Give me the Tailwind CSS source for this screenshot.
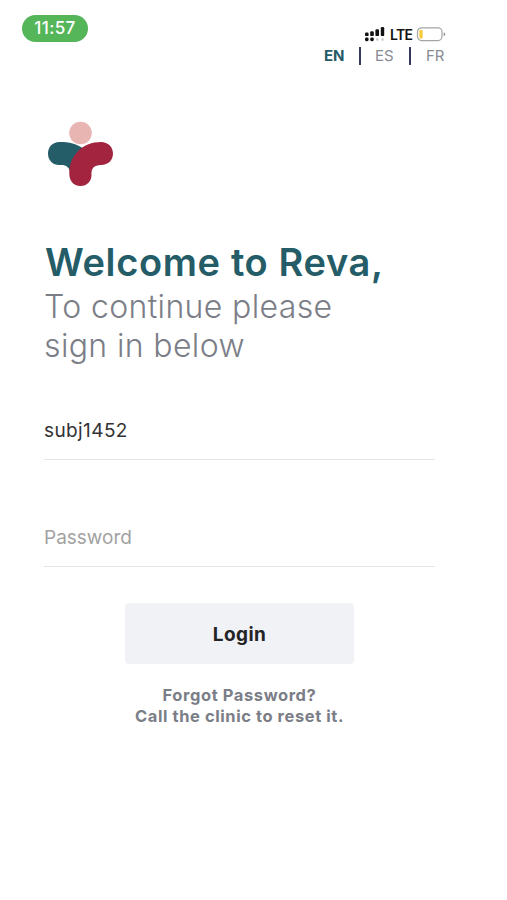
<!DOCTYPE html>
<html lang="en">
<head>
<meta charset="utf-8">
<title>Reva</title>
<script src="https://cdn.jsdelivr.net/npm/@tailwindcss/browser@4"></script>
</head>
<body class="bg-white font-['Inter',sans-serif]">
<div class="w-[479px] h-[900px] flex flex-col overflow-hidden">
  <header class="flex justify-between h-[66px] pl-[22px] pr-[33px]">
    <div class="mt-[15px] w-[66px] h-[27px] rounded-full bg-[#55b559] text-white text-[17px] leading-[27px] font-medium tracking-[0.4px] text-center">11:57</div>
    <div class="flex flex-col items-end pt-[26px]">
      <div class="flex items-center h-[17px]">
        <svg class="w-[22px] h-[17px]" viewBox="0 0 22 17" fill="#111">
          <rect x="1" y="6.5" width="3.6" height="3.6" rx="1.2"/><rect x="6.2" y="5.2" width="3.6" height="4.9" rx="1.2"/><rect x="11.4" y="3.3" width="3.6" height="6.8" rx="1.2"/><rect x="16.8" y="1" width="3.4" height="9.1" rx="1.2"/>
          <rect x="1" y="11.6" width="3.6" height="3.6" rx="1.4"/><rect x="6.2" y="11.6" width="3.6" height="3.6" rx="1.4"/>
          <rect x="12" y="12.2" width="2.6" height="2.6" rx="1" fill="#ccc"/><rect x="17.2" y="12.2" width="2.6" height="2.6" rx="1" fill="#ccc"/>
        </svg>
        <span class="ml-[4px] w-[23px] text-[14px] leading-[17px] font-semibold tracking-[-0.7px] text-[#111]">LTE</span>
        <svg class="ml-[3px] w-[30px] h-[17px]" viewBox="0 0 30 17" fill="none">
          <rect x="1.5" y="1.8" width="24.5" height="12.8" rx="4" stroke="#a5a5a5" stroke-width="1.2"/>
          <rect x="3.4" y="4" width="3.2" height="8.4" rx="1.2" fill="#f5ca36"/>
          <path d="M27.7 6.2v4q1.4-.6 1.4-2t-1.4-2z" fill="#8b8b8b"/>
        </svg>
      </div>
      <nav class="flex items-center h-[22px] mt-[2px] mr-px text-[15px] leading-[22px] text-[#878b93]">
        <span class="w-[21px] font-bold text-[#245c67]">EN</span>
        <i class="ml-[14px] w-[2px] h-[18px] bg-[#35375b]"></i>
        <span class="ml-[14px] w-[20px]">ES</span>
        <i class="ml-[14px] w-[2px] h-[18px] bg-[#35375b]"></i>
        <span class="ml-[15px] w-[19px]">FR</span>
      </nav>
    </div>
  </header>
  <main class="flex flex-col px-[44px]">
    <svg class="mt-[54px] ml-[3px] w-[68px] h-[68px]" viewBox="47 120 68 68">
      <circle cx="80.5" cy="133" r="11.3" fill="#e9b5b3"/>
      <path d="M59.500 142C52.500 142 48 147 48 153.700C48 160 52.500 165 59.500 165C65.500 164.300 69.500 167 70 172L84 160V149C77 143.700 69 142 59.500 142Z" fill="#245c67"/>
      <path d="M101 142C83 142 69.300 155 69.300 173.500C69.300 181 73.500 186 80.300 186C87.500 186 91.500 181 91.500 175C91 168.500 94 165 101 165C108.500 165 113 160 113 153.500C113 147 108 142 101 142Z" fill="#a2243e"/>
    </svg>
    <h1 class="mt-[51px] ml-px h-[48px] text-[38px] leading-[47px] font-semibold tracking-[0.64px] text-[#245c67] whitespace-nowrap">Welcome to Reva,</h1>
    <p class="text-[32px] leading-[39px] font-light tracking-[0.36px] text-[#7b7e87] whitespace-nowrap">To continue please<br>sign in below</p>
    <div class="mt-[35px] h-[60px] border-b border-[#e5e5e5] pt-[19px] text-[19px] leading-[24px] tracking-[0.4px] text-[#333]"><span>subj1452</span></div>
    <div class="mt-[48px] h-[59px] border-b border-[#e5e5e5] pt-[18px] text-[19px] leading-[24px] text-[#a2a2a2]"><span>Password</span></div>
    <button class="mt-[36px] ml-[81px] w-[229px] h-[61px] rounded-[4px] bg-[#f1f2f6] pt-[3px] text-[19px] font-bold tracking-[0.4px] text-[#242426]">Login</button>
    <p class="mt-[21px] text-center text-[16.5px] leading-[21px] font-bold tracking-[0.58px] text-[#7b7e87]">Forgot Password?<br>Call the clinic to reset it.</p>
  </main>
</div>
</body>
</html>
